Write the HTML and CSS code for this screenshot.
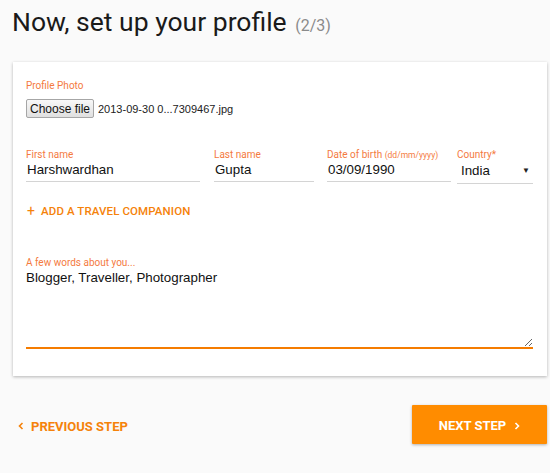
FILE: index.html
```html
<!DOCTYPE html>
<html>
<head>
<meta charset="utf-8">
<link rel="stylesheet" href="styles.css">
</head>
<body>
<h1 class="title">Now, set up your profile <span class="step">(2/3)</span></h1>
<div class="card">
  <div class="photo">
    <div class="label">Profile Photo</div>
    <div class="file-row">
      <span class="file-btn">Choose file</span>
      <span class="file-name">2013-09-30 0...7309467.jpg</span>
    </div>
  </div>
  <div class="fields">
    <div class="field f-first">
      <div class="label">First name</div>
      <div class="input">Harshwardhan</div>
    </div>
    <div class="field f-last">
      <div class="label">Last name</div>
      <div class="input">Gupta</div>
    </div>
    <div class="field f-dob">
      <div class="label">Date of birth <small>(dd/mm/yyyy)</small></div>
      <div class="input">03/09/1990</div>
    </div>
    <div class="field f-country">
      <div class="label">Country*</div>
      <div class="input select"><span>India</span><span class="caret">&#9660;</span></div>
    </div>
  </div>
  <div class="add"><span class="plus">+</span><span>ADD A TRAVEL COMPANION</span></div>
  <div class="about">
    <div class="label">A few words about you...</div>
    <textarea class="textarea">Blogger, Traveller, Photographer</textarea>
  </div>
</div>
<div class="footer">
  <div class="prev">
    <svg class="chev" width="6" height="8" viewBox="0 0 6 8"><polyline points="4.5,1 1.5,4 4.5,7" fill="none" stroke="#f5820a" stroke-width="1.6"/></svg>
    <span>PREVIOUS STEP</span>
  </div>
  <div class="next">
    <span>NEXT STEP</span>
    <svg class="chev" width="6" height="8" viewBox="0 0 6 8"><polyline points="1.5,1 4.5,4 1.5,7" fill="none" stroke="#fff" stroke-width="1.6"/></svg>
  </div>
</div>
</body>
</html>
```
FILE: styles.css
```css
html, body {
  margin: 0;
  padding: 0;
}
body {
  background: #fafafa;
  font-family: Roboto, "Liberation Sans", sans-serif;
  width: 550px;
  height: 473px;
  overflow: hidden;
}
.title {
  margin: 7px 0 0 12px;
  height: 30px;
  font-size: 26.5px;
  line-height: 30px;
  font-weight: 400;
  color: #1a1a1a;
  white-space: nowrap;
}
.step {
  margin-left: 2px;
  font-size: 16px;
  line-height: 1;
  color: #8a8a8a;
}
.card {
  margin: 25px 3px 0 13px;
  height: 314px;
  box-sizing: border-box;
  background: #fff;
  box-shadow: 0 1px 3px rgba(0,0,0,0.28);
  padding: 18px 14px 0 13px;
}
.label {
  font-size: 10px;
  line-height: 12px;
  height: 12px;
  color: #f47a3e;
  white-space: nowrap;
}
.label small {
  font-size: 8.5px;
}
.file-row {
  margin-top: 7px;
  display: flex;
  align-items: center;
  font-family: "Liberation Sans", Arial, sans-serif;
}
.file-btn {
  box-sizing: border-box;
  height: 19px;
  width: 68px;
  display: flex;
  align-items: center;
  justify-content: center;
  font-size: 12px;
  color: #111;
  background: linear-gradient(#f8f8f8, #e0e0e0);
  border: 1px solid #a6a6a6;
  border-radius: 2px;
}
.file-name {
  margin-left: 4px;
  font-size: 11px;
  color: #222;
}
.fields {
  margin-top: 31px;
  display: flex;
}
.field .input {
  margin-top: 1px;
  height: 16px;
  font-family: "Liberation Sans", Arial, sans-serif;
  font-size: 13.33px;
  line-height: 16px;
  color: #111;
  border-bottom: 1px solid #d4d4d4;
  padding: 0 0 3px 1px;
}
.f-first { width: 174px; margin-right: 14px; }
.f-last { width: 100px; margin-right: 13px; }
.f-dob { width: 124px; margin-right: 6px; }
.f-country { flex: 1; }
.field .select {
  display: flex;
  justify-content: space-between;
  align-items: center;
  padding-left: 4px;
  padding-right: 3px;
  height: 18px;
  padding-bottom: 3px;
  margin-top: 1px;
}
.caret {
  font-size: 8px;
  color: #222;
}
.add {
  margin-top: 20px;
  height: 14px;
  display: flex;
  align-items: center;
  font-size: 11.5px;
  font-weight: 500;
  color: #f5820a;
  letter-spacing: 0.1px;
}
.plus {
  font-size: 14px;
  font-weight: 400;
  line-height: 14px;
  margin-right: 6px;
  margin-left: 1px;
}
.about {
  margin-top: 39px;
}
.textarea {
  display: block;
  box-sizing: border-box;
  width: 100%;
  height: 79px;
  margin: 1px 0 0 0;
  padding: 0;
  border: none;
  border-bottom: 2px solid #f57c00;
  outline: none;
  resize: vertical;
  font-family: "Liberation Sans", Arial, sans-serif;
  font-size: 13.33px;
  line-height: 16px;
  color: #111;
  background: transparent;
}
.footer {
  margin: 29px 3px 0 0;
  display: flex;
  justify-content: space-between;
  align-items: center;
}
.prev {
  margin-left: 18px;
  padding-top: 3px;
  display: flex;
  align-items: center;
  gap: 7px;
  font-size: 13px;
  font-weight: 700;
  color: #f5820a;
}
.next {
  width: 135px;
  height: 39px;
  box-sizing: border-box;
  padding-top: 2px;
  background: #ff8c00;
  color: #fff;
  font-size: 13px;
  font-weight: 700;
  display: flex;
  align-items: center;
  justify-content: center;
  gap: 8px;
  box-shadow: 0 1px 3px rgba(0,0,0,0.3);
  border-radius: 1px;
}
```
